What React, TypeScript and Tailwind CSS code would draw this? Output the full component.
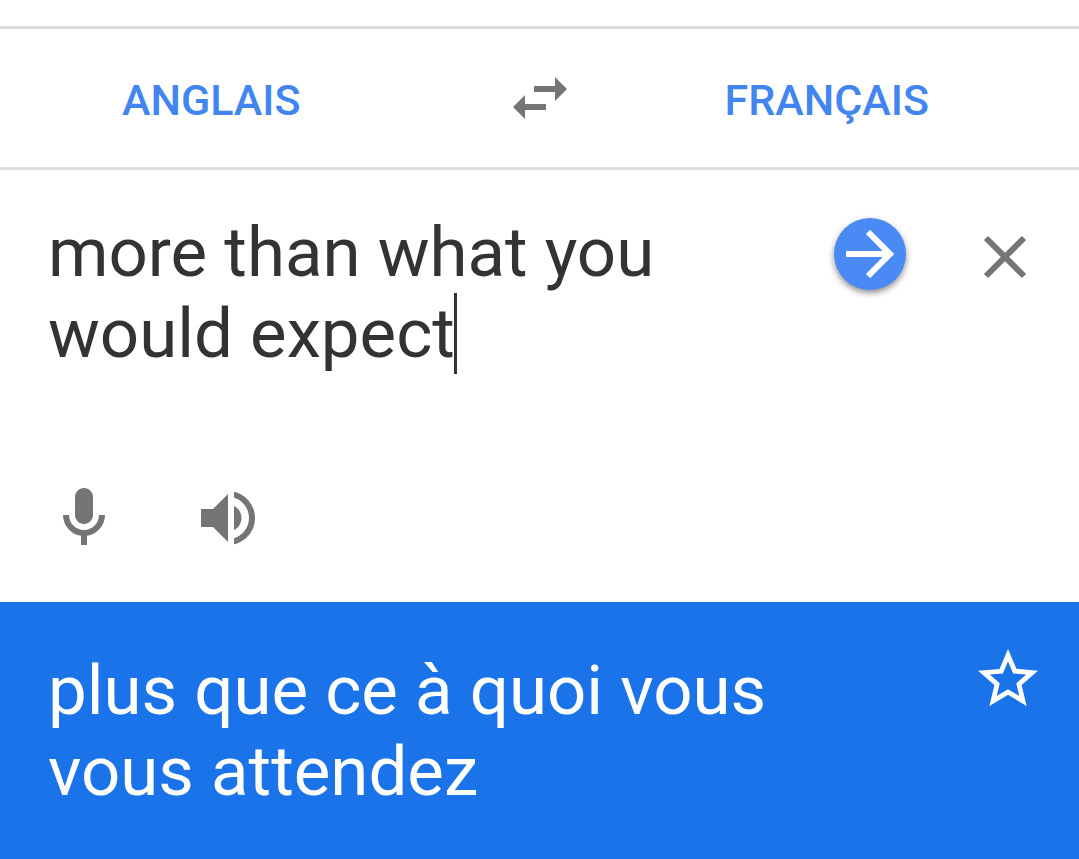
import React, { useState } from "react";

function SwapIcon() {
  return (
    <svg viewBox="0 0 54 42" className="h-[42px] w-[54px]" fill="#757575" aria-hidden="true">
      <path d="M42 0L54 12L42 24V15H21V9H42ZM12 18L0 30L12 42V33H33V27H12Z" />
    </svg>
  );
}

export default function App() {
  const initialText = "more than what you would expect";
  const [text, setText] = useState(initialText);
  return (
    <main className="flex min-h-screen flex-col bg-white font-['Roboto',sans-serif]">
      <header className="pt-[26px]">
        <nav className="grid h-[144px] grid-cols-[1fr_auto_1fr] items-center border-y-[3px] border-[#dedede]">
          <button type="button" className="pt-1 pr-[90px] text-[43px] leading-[48px] font-medium text-[#4285f0]">
            ANGLAIS
          </button>
          <button type="button" aria-label="Inverser les langues">
            <SwapIcon />
          </button>
          <button type="button" className="pt-1 pl-2 text-[43px] leading-[48px] font-medium text-[#4285f0]">
            FRANÇAIS
          </button>
        </nav>
      </header>
      <section className="pt-[42px] pr-[52px] pb-12 pl-12">
        <div className="flex items-start justify-between gap-12">
          <div className="relative max-w-[660px] flex-1">
            <textarea
              aria-label="Texte à traduire"
              value={text}
              onChange={(e) => setText(e.target.value)}
              rows={2}
              className="block w-full resize-none overflow-hidden bg-transparent text-[69px] leading-[81px] text-[#333333] outline-none"
            />
            {text === initialText && (
              <span className="pointer-events-none absolute bottom-0 left-[406px] h-[81px] w-[3px] bg-[#333333]" aria-hidden="true" />
            )}
          </div>
          <div className="flex items-center gap-[77px] pt-[6px]">
            <button
              type="button"
              aria-label="Traduire"
              className="flex size-[72px] items-center justify-center rounded-full bg-[#4a8af4] shadow-[0_3px_6px_rgba(0,0,0,0.45)]"
            >
              <svg viewBox="0 0 48 48" className="size-12" fill="none" stroke="white" strokeWidth="6" aria-hidden="true">
                <path d="M0 24H43M22 2L44 24L22 46" />
              </svg>
            </button>
            <button type="button" aria-label="Effacer" className="pt-[6px]">
              <svg viewBox="0 0 44 44" className="size-11" fill="none" stroke="#757575" strokeWidth="6" aria-hidden="true">
                <path d="M3 3L41 41M41 3L3 41" />
              </svg>
            </button>
          </div>
        </div>
        <div className="mt-[108px] flex items-center gap-[72px]">
          <button type="button" aria-label="Parler">
            <svg viewBox="0 0 24 24" className="size-[72px]" fill="#757575" aria-hidden="true">
              <path d="M12 14c1.660 0 3-1.340 3-3V5c0-1.660-1.340-3-3-3S9 3.340 9 5v6c0 1.660 1.340 3 3 3zm5-3c0 2.760-2.240 5-5 5s-5-2.240-5-5H5c0 3.530 2.610 6.430 6 6.920V21h2v-3.080c3.390-.490 6-3.390 6-6.920h-2z" />
            </svg>
          </button>
          <button type="button" aria-label="Écouter">
            <svg viewBox="0 0 24 24" className="size-[72px]" fill="#757575" aria-hidden="true">
              <path d="M3 9v6h4l5 5V4L7 9H3zm13.500 3c0-1.770-1.020-3.290-2.500-4.030v8.050c1.480-.730 2.500-2.250 2.500-4.020zM14 3.230v2.060c2.890.860 5 3.540 5 6.710s-2.110 5.850-5 6.710v2.060c4.010-.910 7-4.490 7-8.770s-2.990-7.860-7-8.770z" />
            </svg>
          </button>
        </div>
      </section>
      <section className="flex flex-1 items-start justify-between bg-[#1a73e8] pt-[41px] pr-[35px] pb-12 pl-12 text-white">
        <p className="max-w-[740px] pt-[7px] text-[69px] leading-[81px]">plus que ce à quoi vous vous attendez</p>
        <button type="button" aria-label="Ajouter aux favoris">
          <svg viewBox="0 0 24 24" className="size-[72px]" fill="white" aria-hidden="true">
            <path d="M22 9.240l-7.190-.620L12 2 9.190 8.630 2 9.240l5.460 4.730L5.820 21 12 17.270 18.180 21l-1.630-7.030L22 9.240zM12 15.400l-3.760 2.270 1-4.280-3.320-2.880 4.380-.380L12 6.100l1.710 4.040 4.380.380-3.320 2.880 1 4.280L12 15.400z" />
          </svg>
        </button>
      </section>
    </main>
  );
}
